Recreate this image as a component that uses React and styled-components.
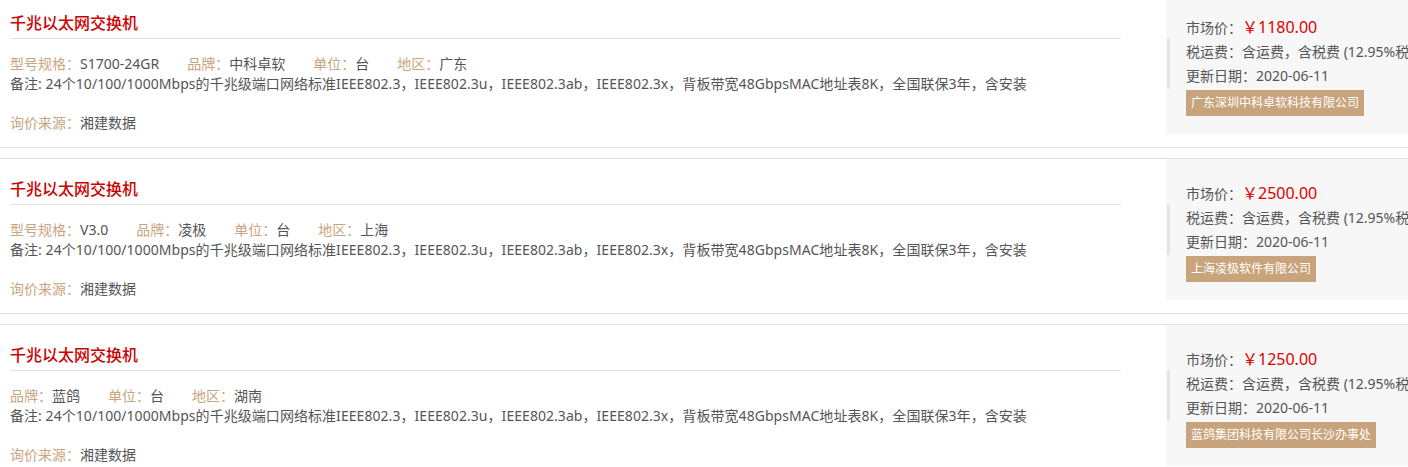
import styled, { createGlobalStyle } from "styled-components";

const GlobalStyle = createGlobalStyle`
  html, body {
    margin: 0;
    padding: 0;
    background: #fff;
    overflow: hidden;
  }
  body {
    font-family: "Noto Sans", "Noto Sans CJK SC", sans-serif;
    font-size: 14px;
    color: #555;
  }
`;

const items = [
  {
    specs: [
      ["型号规格", "S1700-24GR"],
      ["品牌", "中科卓软"],
      ["单位", "台"],
      ["地区", "广东"],
    ],
    price: "1180.00",
    company: "广东深圳中科卓软科技有限公司",
  },
  {
    specs: [
      ["型号规格", "V3.0"],
      ["品牌", "凌极"],
      ["单位", "台"],
      ["地区", "上海"],
    ],
    price: "2500.00",
    company: "上海凌极软件有限公司",
  },
  {
    specs: [
      ["品牌", "蓝鸽"],
      ["单位", "台"],
      ["地区", "湖南"],
    ],
    price: "1250.00",
    company: "蓝鸽集团科技有限公司长沙办事处",
  },
];

const remark =
  "24个10/100/1000Mbps的千兆级端口网络标准IEEE802.3，IEEE802.3u，IEEE802.3ab，IEEE802.3x，背板带宽48GbpsMAC地址表8K，全国联保3年，含安装";

export default function App() {
  return (
    <>
      <GlobalStyle />
      <List>
        {items.map((item, i) => (
          <Item key={i}>
            <Main>
              <Title>千兆以太网交换机</Title>
              <Specs>
                {item.specs.map(([label, value]) => (
                  <Spec key={label}>
                    <Label>{label}：</Label>
                    {value}
                  </Spec>
                ))}
              </Specs>
              <Remark>备注: {remark}</Remark>
              <Source>
                <Label>询价来源：</Label>湘建数据
              </Source>
            </Main>
            <Panel>
              <Grip />
              <PanelLine>
                市场价：<Price>￥{item.price}</Price>
              </PanelLine>
              <PanelLine>税运费：含运费，含税费 (12.95%税率)</PanelLine>
              <PanelLine>更新日期：2020-06-11</PanelLine>
              <Company>{item.company}</Company>
            </Panel>
          </Item>
        ))}
      </List>
    </>
  );
}

const List = styled.div`
  width: 1460px;
  margin-top: -8px;
`;

const Item = styled.div`
  display: flex;
  border-top: 1px solid #e1e1e1;
  border-bottom: 1px solid #e1e1e1;
  margin-bottom: 10px;
  height: 154px;
`;

const Main = styled.div`
  width: 1111px;
  padding-left: 10px;
  margin-right: 45px;
  display: flex;
  flex-direction: column;
`;

const Title = styled.div`
  padding-top: 18px;
  padding-bottom: 3px;
  line-height: 24px;
  font-size: 16px;
  font-weight: 500;
  color: #cc0000;
  border-bottom: 1px solid #e1e1e1;
`;

const Specs = styled.div`
  display: flex;
  gap: 28px;
  margin-top: 15px;
  line-height: 20px;
  white-space: nowrap;
`;

const Spec = styled.span`
  color: #555;
`;

const Label = styled.span`
  color: #c9a47f;
`;

const Remark = styled.div`
  line-height: 20px;
  white-space: nowrap;
  letter-spacing: 0.05px;
`;

const Source = styled.div`
  margin-top: 19px;
  line-height: 20px;
`;

const Panel = styled.div`
  position: relative;
  flex: 1;
  height: 141px;
  background: #f7f7f7;
  padding: 22px 0 0 20px;
  box-sizing: border-box;
  white-space: nowrap;
`;

const Grip = styled.div`
  position: absolute;
  left: 1px;
  top: 45px;
  width: 3px;
  height: 51px;
  border-radius: 2px;
  background: #e4e4e4;
`;

const PanelLine = styled.div`
  line-height: 24px;
  color: #555;
`;

const Price = styled.span`
  color: #e00000;
  font-size: 16px;
`;

const Company = styled.div`
  display: inline-block;
  margin-top: 2px;
  padding: 0 5px;
  line-height: 26px;
  font-size: 12px;
  color: #fff;
  background: #c8a47c;
`;
